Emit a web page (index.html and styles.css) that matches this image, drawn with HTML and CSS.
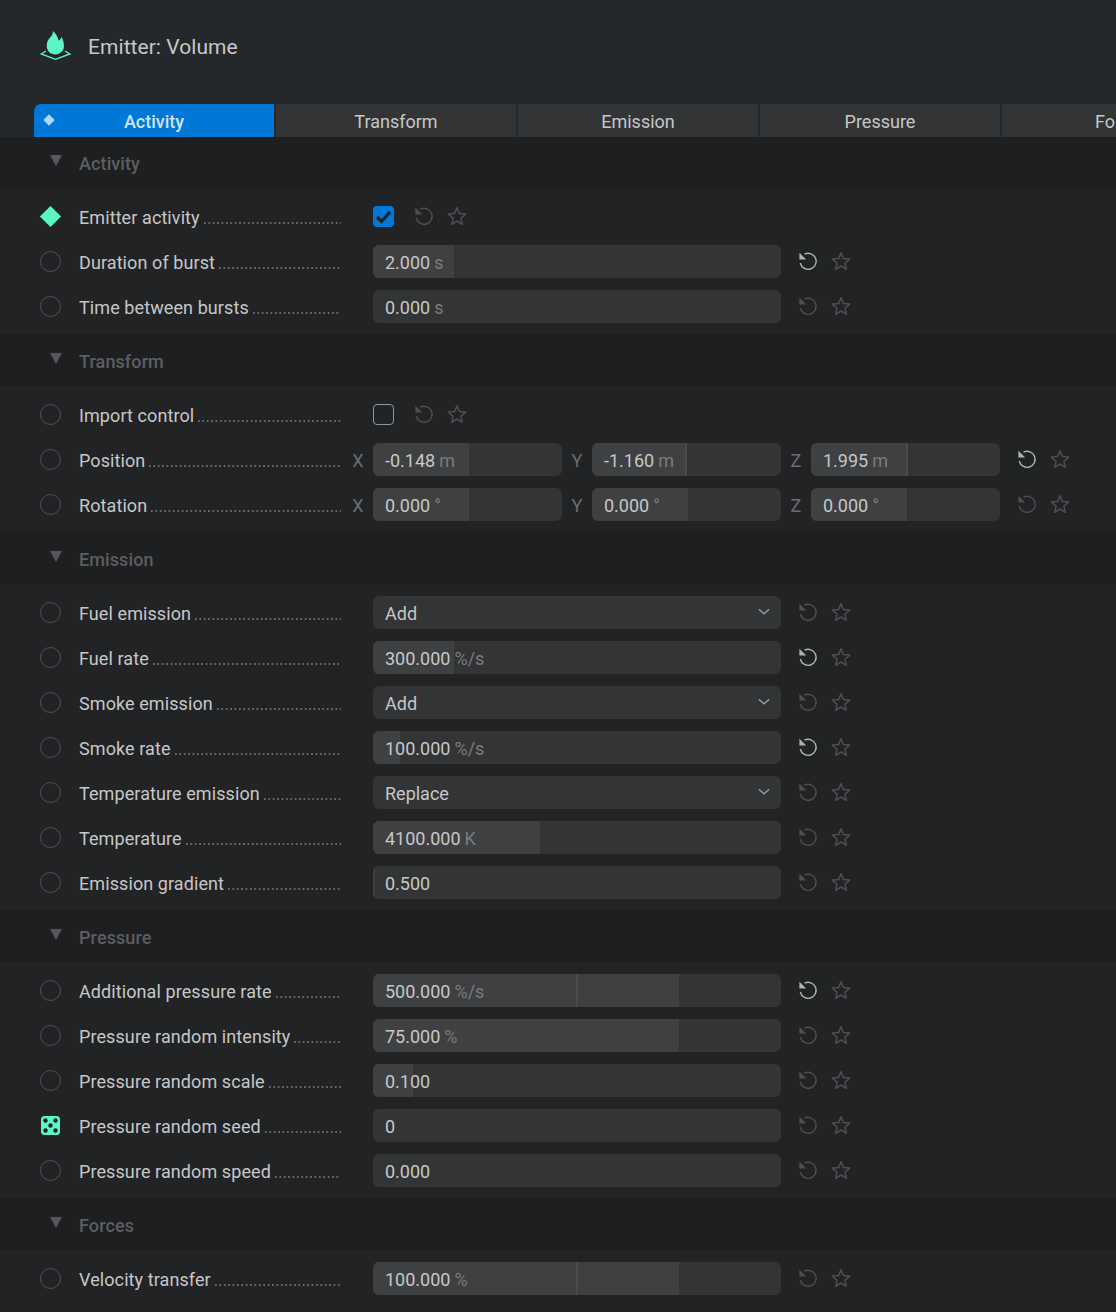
FILE: index.html
```html
<!DOCTYPE html>
<html lang="en">
<head>
  <meta charset="UTF-8" />
  <title>Emitter: Volume</title>
  <link rel="stylesheet" href="styles.css">
</head>
<body>

  <!-- Shared icons -->
  <svg class="defs" width="0" height="0">
    <symbol id="reset" viewBox="0 0 20 20">
      <path d="M6.5 3.2A8 8 0 1 1 2.3 12" fill="none" stroke="currentColor" stroke-width="1.4"/>
      <path d="M1.4 1.8V8.6H8.2Z" fill="currentColor"/>
    </symbol>
    <symbol id="star" viewBox="0 0 20 20">
      <path d="M10 1.8L12.4 7.6L18.6 8.1L13.9 12.2L15.3 18.3L10 15L4.7 18.3L6.1 12.2L1.4 8.1L7.6 7.6Z" fill="none" stroke="currentColor" stroke-width="1.5" stroke-linejoin="round"/>
    </symbol>
    <symbol id="chevron" viewBox="0 0 12 8">
      <path d="M.8 1.2L6 5.8L11.2 1.2" fill="none" stroke="currentColor" stroke-width="1.5"/>
    </symbol>
  </svg>

  <header class="title-bar">
    <svg class="logo" viewBox="40 30 32 32" width="32" height="32">
      <path d="M46 51L41.2 54L55.5 59.3L69.8 54L65 51" fill="none" stroke="#5cf5c4" stroke-width="1.4"/>
      <path d="M52.7 31C53.5 35 50 37 48 40.5C46 44 46.5 49 49 52C50.5 53.7 53 54.4 55.5 54.4C60 54.4 64 51 64 46C64 42 62.5 39 61.7 36.7C61 39 60 40 58.5 40.5C58 37 55.5 33 52.7 31Z" fill="#5cf5c4"/>
    </svg>
    <h1>Emitter: Volume</h1>
  </header>

  <nav class="tabs">
    <div class="tab active"><span class="tab-mark"></span>Activity</div>
    <div class="tab">Transform</div>
    <div class="tab">Emission</div>
    <div class="tab">Pressure</div>
    <div class="tab">Forces</div>
  </nav>

  <section>
    <div class="section-head"><span class="triangle"></span>Activity</div>
    <div class="rows">
      <div class="row">
        <span class="keyed"></span>
        <label class="name"><span>Emitter activity</span><i></i></label>
        <span class="check on"><svg viewBox="0 0 21 21"><path d="M4 11L8.5 15.5L17 6" fill="none" stroke="#1f2123" stroke-width="3.2"/></svg></span>
        <span class="actions near"><svg class="icon"><use href="#reset"/></svg><svg class="icon"><use href="#star"/></svg></span>
      </div>
      <div class="row">
        <span class="dot"></span>
        <label class="name"><span>Duration of burst</span><i></i></label>
        <div class="field wide"><b class="fill" style="width:81px"></b><span>2.000</span><em>s</em></div>
        <span class="actions changed"><svg class="icon"><use href="#reset"/></svg><svg class="icon"><use href="#star"/></svg></span>
      </div>
      <div class="row">
        <span class="dot"></span>
        <label class="name"><span>Time between bursts</span><i></i></label>
        <div class="field wide"><span>0.000</span><em>s</em></div>
        <span class="actions"><svg class="icon"><use href="#reset"/></svg><svg class="icon"><use href="#star"/></svg></span>
      </div>
    </div>
  </section>

  <section>
    <div class="section-head"><span class="triangle"></span>Transform</div>
    <div class="rows">
      <div class="row">
        <span class="dot"></span>
        <label class="name"><span>Import control</span><i></i></label>
        <span class="check"></span>
        <span class="actions near"><svg class="icon"><use href="#reset"/></svg><svg class="icon"><use href="#star"/></svg></span>
      </div>
      <div class="row">
        <span class="dot"></span>
        <label class="name"><span>Position</span><i></i></label>
        <span class="axis">X</span>
        <div class="field"><b class="fill" style="width:96px"></b><span>-0.148</span><em>m</em></div>
        <span class="axis">Y</span>
        <div class="field"><b class="fill" style="width:93px"></b><b class="tick" style="left:93px"></b><span>-1.160</span><em>m</em></div>
        <span class="axis">Z</span>
        <div class="field"><b class="fill" style="width:95px"></b><b class="tick" style="left:95px"></b><span>1.995</span><em>m</em></div>
        <span class="actions changed"><svg class="icon"><use href="#reset"/></svg><svg class="icon"><use href="#star"/></svg></span>
      </div>
      <div class="row">
        <span class="dot"></span>
        <label class="name"><span>Rotation</span><i></i></label>
        <span class="axis">X</span>
        <div class="field"><b class="fill" style="width:96px"></b><span>0.000</span><em>°</em></div>
        <span class="axis">Y</span>
        <div class="field"><b class="fill" style="width:96px"></b><span>0.000</span><em>°</em></div>
        <span class="axis">Z</span>
        <div class="field"><b class="fill" style="width:96px"></b><span>0.000</span><em>°</em></div>
        <span class="actions"><svg class="icon"><use href="#reset"/></svg><svg class="icon"><use href="#star"/></svg></span>
      </div>
    </div>
  </section>

  <section>
    <div class="section-head"><span class="triangle"></span>Emission</div>
    <div class="rows">
      <div class="row">
        <span class="dot"></span>
        <label class="name"><span>Fuel emission</span><i></i></label>
        <div class="field wide select"><span>Add</span><svg class="chevron"><use href="#chevron"/></svg></div>
        <span class="actions"><svg class="icon"><use href="#reset"/></svg><svg class="icon"><use href="#star"/></svg></span>
      </div>
      <div class="row">
        <span class="dot"></span>
        <label class="name"><span>Fuel rate</span><i></i></label>
        <div class="field wide"><b class="fill" style="width:81px"></b><span>300.000</span><em>%/s</em></div>
        <span class="actions changed"><svg class="icon"><use href="#reset"/></svg><svg class="icon"><use href="#star"/></svg></span>
      </div>
      <div class="row">
        <span class="dot"></span>
        <label class="name"><span>Smoke emission</span><i></i></label>
        <div class="field wide select"><span>Add</span><svg class="chevron"><use href="#chevron"/></svg></div>
        <span class="actions"><svg class="icon"><use href="#reset"/></svg><svg class="icon"><use href="#star"/></svg></span>
      </div>
      <div class="row">
        <span class="dot"></span>
        <label class="name"><span>Smoke rate</span><i></i></label>
        <div class="field wide"><b class="fill" style="width:27px"></b><span>100.000</span><em>%/s</em></div>
        <span class="actions changed"><svg class="icon"><use href="#reset"/></svg><svg class="icon"><use href="#star"/></svg></span>
      </div>
      <div class="row">
        <span class="dot"></span>
        <label class="name"><span>Temperature emission</span><i></i></label>
        <div class="field wide select"><span>Replace</span><svg class="chevron"><use href="#chevron"/></svg></div>
        <span class="actions"><svg class="icon"><use href="#reset"/></svg><svg class="icon"><use href="#star"/></svg></span>
      </div>
      <div class="row">
        <span class="dot"></span>
        <label class="name"><span>Temperature</span><i></i></label>
        <div class="field wide"><b class="fill" style="width:167px"></b><span>4100.000</span><em>K</em></div>
        <span class="actions"><svg class="icon"><use href="#reset"/></svg><svg class="icon"><use href="#star"/></svg></span>
      </div>
      <div class="row">
        <span class="dot"></span>
        <label class="name"><span>Emission gradient</span><i></i></label>
        <div class="field wide"><b class="fill" style="width:2px"></b><span>0.500</span></div>
        <span class="actions"><svg class="icon"><use href="#reset"/></svg><svg class="icon"><use href="#star"/></svg></span>
      </div>
    </div>
  </section>

  <section>
    <div class="section-head"><span class="triangle"></span>Pressure</div>
    <div class="rows">
      <div class="row">
        <span class="dot"></span>
        <label class="name"><span>Additional pressure rate</span><i></i></label>
        <div class="field wide"><b class="fill" style="width:306px"></b><b class="tick" style="left:203px"></b><span>500.000</span><em>%/s</em></div>
        <span class="actions changed"><svg class="icon"><use href="#reset"/></svg><svg class="icon"><use href="#star"/></svg></span>
      </div>
      <div class="row">
        <span class="dot"></span>
        <label class="name"><span>Pressure random intensity</span><i></i></label>
        <div class="field wide"><b class="fill" style="width:306px"></b><span>75.000</span><em>%</em></div>
        <span class="actions"><svg class="icon"><use href="#reset"/></svg><svg class="icon"><use href="#star"/></svg></span>
      </div>
      <div class="row">
        <span class="dot"></span>
        <label class="name"><span>Pressure random scale</span><i></i></label>
        <div class="field wide"><b class="fill" style="width:40px"></b><span>0.100</span></div>
        <span class="actions"><svg class="icon"><use href="#reset"/></svg><svg class="icon"><use href="#star"/></svg></span>
      </div>
      <div class="row">
        <svg class="dice" viewBox="0 0 19 19">
          <rect width="19" height="19" rx="3.5" fill="#5cf5c4"/>
          <circle cx="4.5" cy="4.5" r="2.2" fill="#1f2123"/><circle cx="14.5" cy="4.5" r="2.2" fill="#1f2123"/>
          <circle cx="9.5" cy="9.5" r="2.2" fill="#1f2123"/>
          <circle cx="4.5" cy="14.5" r="2.2" fill="#1f2123"/><circle cx="14.5" cy="14.5" r="2.2" fill="#1f2123"/>
        </svg>
        <label class="name"><span>Pressure random seed</span><i></i></label>
        <div class="field wide"><span>0</span></div>
        <span class="actions"><svg class="icon"><use href="#reset"/></svg><svg class="icon"><use href="#star"/></svg></span>
      </div>
      <div class="row">
        <span class="dot"></span>
        <label class="name"><span>Pressure random speed</span><i></i></label>
        <div class="field wide"><span>0.000</span></div>
        <span class="actions"><svg class="icon"><use href="#reset"/></svg><svg class="icon"><use href="#star"/></svg></span>
      </div>
    </div>
  </section>

  <section>
    <div class="section-head"><span class="triangle"></span>Forces</div>
    <div class="rows">
      <div class="row">
        <span class="dot"></span>
        <label class="name"><span>Velocity transfer</span><i></i></label>
        <div class="field wide"><b class="fill" style="width:306px"></b><b class="tick" style="left:203px"></b><span>100.000</span><em>%</em></div>
        <span class="actions"><svg class="icon"><use href="#reset"/></svg><svg class="icon"><use href="#star"/></svg></span>
      </div>
    </div>
  </section>

</body>
</html>
```

FILE: styles.css
```css
body {
  margin: 0;
  height: 1312px;
  overflow: hidden;
  background: #222325;
  font-family: Roboto, "Liberation Sans", sans-serif;
  font-size: 18px;
  color: #c6c7c8;
}

.defs {
  position: absolute;
}

/* title + tabs */
.title-bar {
  display: flex;
  align-items: center;
  height: 104px;
  padding: 0 0 10px 40px;
  box-sizing: border-box;
  background: #24282a;
}

.logo {
  margin: -2px 16px 0 0;
}

.title-bar h1 {
  margin: 0;
  font-size: 21px;
  font-weight: 400;
  letter-spacing: .06px;
}

.tabs {
  display: flex;
  gap: 2px;
  height: 33px;
  padding-left: 34px;
  overflow: hidden;
  background: #24282a;
}

.tab {
  position: relative;
  flex: 0 0 240px;
  line-height: 35px;
  text-align: center;
  background: #333436;
}

.tab.active {
  font-weight: 500;
  color: #cfe4f7;
  background: #0078d7;
  border-top-left-radius: 7px;
}

.tab-mark {
  position: absolute;
  left: 11px;
  top: 12px;
  width: 8px;
  height: 8px;
  background: #b5d7f5;
  transform: rotate(45deg);
}

/* sections */
.section-head {
  display: flex;
  align-items: center;
  height: 52px;
  box-sizing: border-box;
  padding: 2px 0 0 50px;
  font-weight: 500;
  letter-spacing: .1px;
  color: #5c5e61;
  background: #1e1f21;
}

section:first-of-type .section-head {
  height: 51px;
}

.triangle {
  width: 0;
  height: 0;
  margin: -6px 17px 0 0;
  border-left: 6px solid transparent;
  border-right: 6px solid transparent;
  border-top: 11px solid #55575a;
}

.rows {
  padding: 7px 0 4px;
}

.row {
  display: flex;
  align-items: center;
  height: 45px;
  box-sizing: border-box;
  padding: 0 0 2px 40px;
}

.dot {
  flex: none;
  width: 21px;
  height: 21px;
  box-sizing: border-box;
  border: 1.5px solid #505255;
  border-radius: 50%;
}

.keyed {
  flex: none;
  width: 15px;
  height: 15px;
  margin: 0 3px;
  background: #5cf5c4;
  transform: rotate(45deg);
}

.dice {
  flex: none;
  width: 19px;
  height: 19px;
  margin: 0 1px;
}

.name {
  display: flex;
  align-items: baseline;
  flex: none;
  width: 262px;
  margin: 0 2px 0 18px;
  padding-top: 2px;
  white-space: nowrap;
  letter-spacing: .09px;
}

.name i {
  flex: 1;
  height: 2px;
  margin-left: 4px;
  background: linear-gradient(to right, #66686a 1.6px, transparent 1.6px) 0 0 / 4.4px 2px;
}

.check {
  flex: none;
  width: 21px;
  height: 21px;
  box-sizing: border-box;
  margin-left: 30px;
  border: 1.5px solid #8d9899;
  border-radius: 4px;
}

.check.on {
  border: 0;
  background: #0078d7;
}

.check svg {
  display: block;
}

.axis {
  flex: none;
  width: 30px;
  padding-top: 1px;
  text-align: center;
  color: #6c6e70;
}

.field {
  position: relative;
  flex: none;
  display: flex;
  align-items: center;
  gap: 4px;
  width: 189px;
  height: 33px;
  box-sizing: border-box;
  padding: 2px 12px 0;
  overflow: hidden;
  border-radius: 6px;
  background: #333436;
}

.field.wide {
  width: 408px;
  margin-left: 30px;
}

.field span,
.field em {
  position: relative;
}

.field em {
  font-style: normal;
  color: #7a7c7e;
}

.fill {
  position: absolute;
  left: 0;
  top: 0;
  bottom: 0;
  background: #3f4042;
}

.tick {
  position: absolute;
  top: 0;
  bottom: 0;
  width: 2px;
  background: #4a4b4d;
}

.select {
  justify-content: space-between;
}

.chevron {
  width: 12px;
  height: 8px;
  margin: -3px -1px 0 0;
  color: #8f9c9c;
}

.actions {
  display: flex;
  gap: 13px;
  margin: 0 0 1px 17px;
  color: #4d4f51;
}

.actions.near {
  margin-left: 20px;
}

.icon {
  display: block;
  width: 20px;
  height: 20px;
}

.actions.changed .icon:first-child {
  color: #abb3b3;
}
```
